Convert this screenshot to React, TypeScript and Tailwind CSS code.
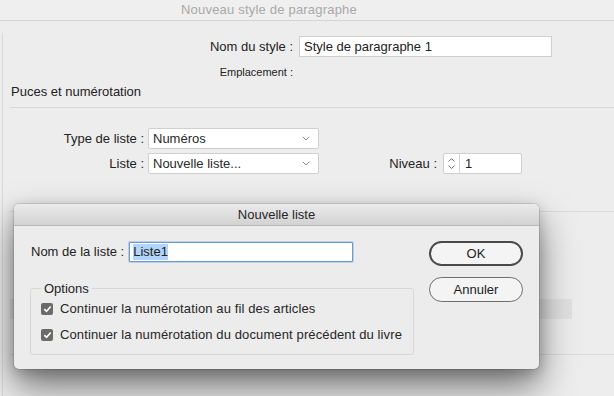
import React from "react";

const font = { fontFamily: '"Liberation Sans", Arial, sans-serif' };

function Chevron() {
  return (
    <svg width="8" height="5" viewBox="0 0 8 5" className="shrink-0">
      <path d="M0.8 0.8 L4 4 L7.2 0.8" fill="none" stroke="#8a8a8a" strokeWidth="1" />
    </svg>
  );
}

function Select({ value }: { value: string }) {
  return (
    <div className="flex items-center justify-between w-[171px] h-[21px] bg-white border border-[#cfcfcf] rounded-[2px] pl-[4px] pr-[8px] text-[13px] text-[#2a2a2a]">
      <span>{value}</span>
      <Chevron />
    </div>
  );
}

function Check({ label }: { label: string }) {
  return (
    <div className="flex items-center h-[14px] gap-[7px] whitespace-nowrap">
      <span className="flex items-center justify-center shrink-0 w-[12px] h-[12px] rounded-[2px] bg-[#6b6b6b]">
        <svg width="9" height="8" viewBox="0 0 9 8">
          <path d="M1.3 4.2 L3.5 6.3 L7.7 1.5" fill="none" stroke="#fff" strokeWidth="1.6" />
        </svg>
      </span>
      <span className="text-[13px] text-[#262626] tracking-[0.12px]">{label}</span>
    </div>
  );
}

export default function App() {
  return (
    <div className="relative w-[614px] h-[396px] overflow-hidden bg-[#ededed]" style={font}>
      {/* window title */}
      <div className="h-[21px] flex items-center justify-center border-b border-[#d4d4d4] bg-[#efefef] text-[13px] text-[#a9a9a9]">
        <span className="ml-[-76px] tracking-[0.2px]">Nouveau style de paragraphe</span>
      </div>

      <div className="flex h-[375px]">
        <div className="mt-[12px] ml-[2px] w-px bg-[#dadada]" />
        <div className="flex-1">
          <div className="flex items-center h-[21px] mt-[15px]">
            <span className="w-[290px] text-right text-[13px] text-[#222]">Nom du style :</span>
            <div className="ml-[6px] w-[253px] h-[21px] bg-white border border-[#cfcfcf] flex items-center px-[4px] text-[13px] text-[#222]">
              Style de paragraphe 1
            </div>
          </div>
          <div className="flex items-center h-[14px] mt-[8px]">
            <span className="w-[290px] text-right text-[11px] text-[#222]">Emplacement :</span>
          </div>
          <div className="flex items-center h-[14px] mt-[6px] pl-[8px] text-[13px] text-[#222]">
            Puces et numérotation
          </div>
          <div className="mt-[8px] ml-[7px] h-px bg-[#d8d8d8]" />

          <div className="flex items-center h-[21px] mt-[20px]">
            <span className="w-[141px] text-right text-[13px] text-[#222]">Type de liste :</span>
            <div className="ml-[4px]">
              <Select value="Numéros" />
            </div>
          </div>
          <div className="flex items-center h-[21px] mt-[4px]">
            <span className="w-[141px] text-right text-[13px] text-[#222]">Liste :</span>
            <div className="ml-[4px]">
              <Select value="Nouvelle liste..." />
            </div>
            <span className="w-[118px] text-right text-[13px] text-[#222]">Niveau :</span>
            <div className="ml-[6px] flex w-[79px] h-[21px] bg-white border border-[#cfcfcf] rounded-[2px]">
              <div className="w-[16px] flex flex-col items-center justify-center gap-[3px] border-r border-[#d6d6d6]">
                <svg width="7" height="4" viewBox="0 0 7 4">
                  <path d="M0.6 3.5 L3.5 0.6 L6.4 3.5" fill="none" stroke="#6a6a6a" strokeWidth="1" />
                </svg>
                <svg width="7" height="4" viewBox="0 0 7 4">
                  <path d="M0.6 0.5 L3.5 3.4 L6.4 0.5" fill="none" stroke="#6a6a6a" strokeWidth="1" />
                </svg>
              </div>
              <span className="pl-[5px] text-[13px] text-[#222] leading-[19px]">1</span>
            </div>
          </div>

          {/* content behind the dialog */}
          <div className="mt-[37px] ml-[7px] h-px bg-[#dcdcdc]" />
          <div className="mt-[87px] ml-[7px] w-[562px] h-[20px] bg-[#e1e1e1]" />
          <div className="mt-[35px] ml-[7px] h-px bg-[#dcdcdc]" />
        </div>
      </div>

      {/* modal dialog */}
      <div className="absolute left-[14px] top-[204px] w-[525px] h-[165px] rounded-[5px] bg-[#ececec] overflow-hidden shadow-[0_18px_36px_rgba(0,0,0,0.5),0_4px_14px_rgba(0,0,0,0.2),0_0_0_1px_rgba(0,0,0,0.1)]">
        <div className="h-[22px] flex items-center justify-center bg-gradient-to-b from-[#ebebeb] to-[#d2d2d2] border-b border-[#b8b8b8] text-[13px] text-[#262626]">
          Nouvelle liste
        </div>
        <div className="flex">
          <div className="pl-[16px]">
            <div className="flex items-center h-[20px] mt-[16px]">
              <span className="pl-[1px] text-[13px] text-[#222]">Nom de la liste :</span>
              <div className="ml-[5px] w-[224px] h-[20px] bg-white border border-[#6b9bd6] rounded-[1px] shadow-[0_0_0_1px_rgba(107,155,214,0.35)] flex items-center px-[3px]">
                <span className="bg-[#b3d4fc] text-[13px] text-[#222] leading-[16px]">Liste1</span>
              </div>
            </div>
            <fieldset className="mt-[19px] w-[384px] border border-[#d7d7d7] rounded-[3px] px-[10px] pb-[12px]">
              <legend className="px-[3px] text-[13px] text-[#222] leading-[15px]">Options</legend>
              <div className="flex flex-col gap-[12px] pt-[6px]">
                <Check label="Continuer la numérotation au fil des articles" />
                <Check label="Continuer la numérotation du document précédent du livre" />
              </div>
            </fieldset>
          </div>
          <div className="ml-auto mr-[16px] pt-[15px] flex flex-col gap-[11px]">
            <div className="w-[94px] h-[25px] rounded-full border-2 border-[#4a4a4a] flex items-center justify-center text-[13px] text-[#222] bg-[#f4f4f4]">
              OK
            </div>
            <div className="w-[94px] h-[25px] rounded-full border border-[#6e6e6e] flex items-center justify-center text-[13px] text-[#222] bg-[#f4f4f4]">
              Annuler
            </div>
          </div>
        </div>
      </div>
    </div>
  );
}
